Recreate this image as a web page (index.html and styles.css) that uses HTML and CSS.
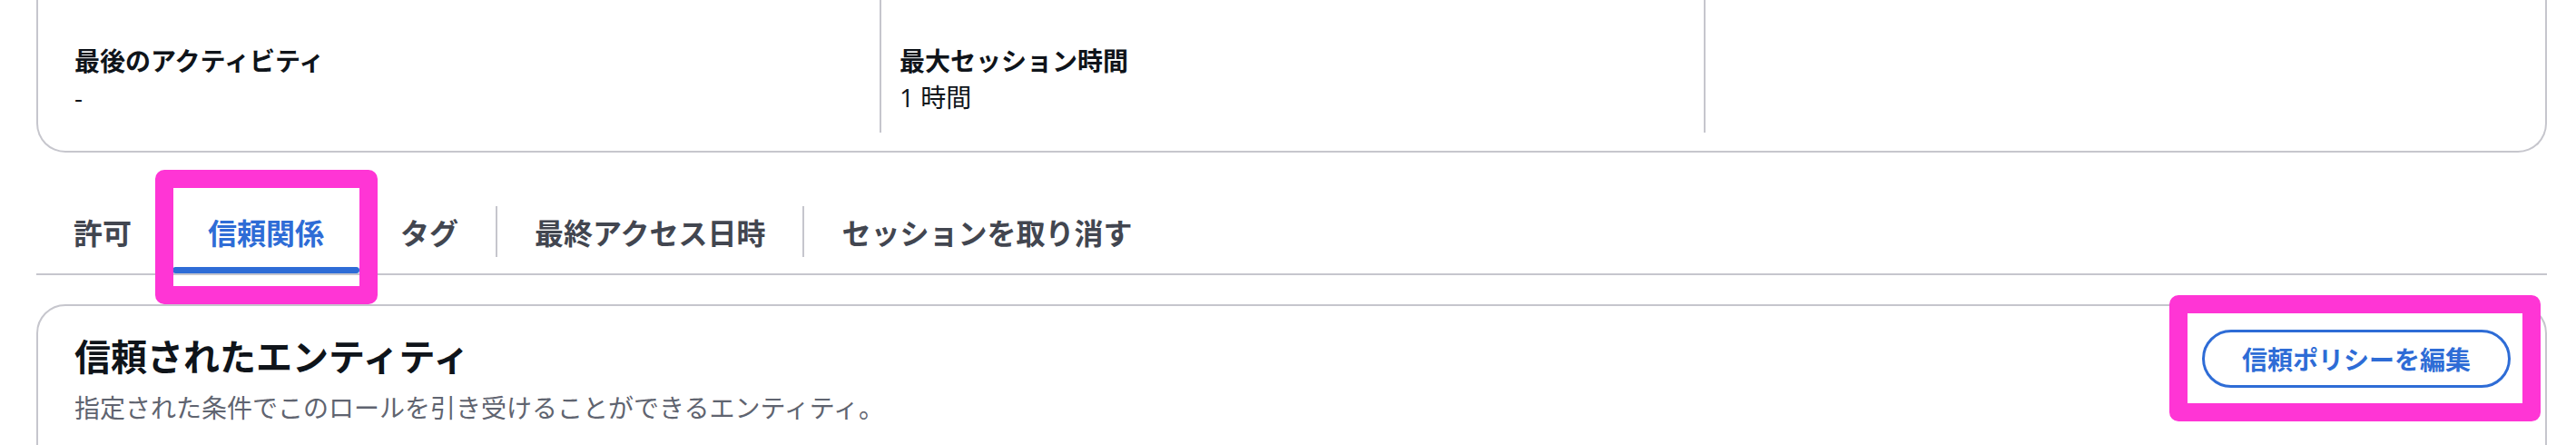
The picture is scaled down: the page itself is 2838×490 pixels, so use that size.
FILE: index.html
```html
<!DOCTYPE html>
<html lang="ja">
<head>
<meta charset="utf-8">
<title>ロール</title>
<link rel="stylesheet" href="styles.css">
</head>
<body>
<div class="page">
  <section class="summary">
    <div class="cols">
      <div class="col">
        <div class="label">最後のアクティビティ</div>
        <div class="value">-</div>
      </div>
      <div class="col col-div">
        <div class="label">最大セッション時間</div>
        <div class="value">1 時間</div>
      </div>
      <div class="col col-div"></div>
    </div>
  </section>

  <nav class="tabs">
    <div class="tab">許可</div>
    <span class="tab-sep"></span>
    <div class="tab tab-active">信頼関係</div>
    <span class="tab-sep"></span>
    <div class="tab">タグ</div>
    <span class="tab-sep"></span>
    <div class="tab">最終アクセス日時</div>
    <span class="tab-sep"></span>
    <div class="tab">セッションを取り消す</div>
  </nav>

  <section class="panel">
    <div class="panel-head">
      <div class="panel-titles">
        <h2 class="panel-title">信頼されたエンティティ</h2>
        <p class="panel-desc">指定された条件でこのロールを引き受けることができるエンティティ。</p>
      </div>
      <button class="btn">信頼ポリシーを編集</button>
    </div>
  </section>

  <div class="mark mark-tab"></div>
  <div class="mark mark-btn"></div>
</div>
</body>
</html>
```
FILE: styles.css
```css
* { box-sizing: border-box; }

html, body {
  margin: 0;
  padding: 0;
  background: #ffffff;
}

body {
  font-family: "Open Sans", "Noto Sans CJK JP", sans-serif;
  color: #0f141a;
  overflow: hidden;
}

.page {
  position: relative;
  padding: 0 32px 0 40px;
  height: 490px;
}

/* summary container (top cut off) */
.summary {
  border: 2px solid #c6c6cd;
  border-top: none;
  border-radius: 0 0 32px 32px;
  padding: 0 40px 20px 40px;
}

.cols {
  display: grid;
  grid-template-columns: 887px 908px 1fr;
}

.col {
  padding: 47px 0 19px 0;
  min-height: 146px;
}

.col-div {
  border-left: 2px solid #c6c6cd;
  padding-left: 20px;
}

.label {
  font-size: 28px;
  line-height: 40px;
  font-weight: 700;
  color: #0f141a;
}

.value {
  font-size: 28px;
  line-height: 40px;
  font-weight: 400;
  color: #0f141a;
}

/* tabs */
.tabs {
  margin-top: 41px;
  display: flex;
  align-items: center;
  border-bottom: 2px solid #c6c6cd;
  height: 94px;
}

.tab {
  position: relative;
  height: 92px;
  padding: 0 41px;
  display: flex;
  align-items: center;
  font-size: 32px;
  font-weight: 700;
  color: #424650;
  white-space: nowrap;
}

.tab-active {
  color: #2e6cd6;
}

.tab-active::after {
  content: "";
  position: absolute;
  left: 2px;
  right: 2px;
  bottom: 0;
  height: 7px;
  border-radius: 4px;
  background: #2e6cd6;
}

.tab-sep {
  width: 2px;
  height: 56px;
  background: #c6c6cd;
  flex: none;
}

/* trusted entities panel */
.panel {
  margin-top: 32px;
  border: 2px solid #c6c6cd;
  border-radius: 32px;
  padding: 26px 38px 40px 40px;
  min-height: 200px;
}

.panel-head {
  display: flex;
  justify-content: space-between;
  align-items: flex-start;
}

.panel-title {
  margin: 0;
  font-size: 40px;
  line-height: 60px;
  font-weight: 700;
  color: #0f141a;
}

.panel-desc {
  margin: 6px 0 0 0;
  font-size: 28px;
  line-height: 40px;
  color: #5f6470;
}

.btn {
  height: 64px;
  padding: 0 41px;
  border: 3px solid #2e6cd6;
  border-radius: 32px;
  background: #ffffff;
  color: #2e6cd6;
  font-family: "Open Sans", "Noto Sans CJK JP", sans-serif;
  font-size: 28px;
  font-weight: 700;
  display: flex;
  align-items: center;
  white-space: nowrap;
}

/* annotation highlights */
.mark {
  position: absolute;
  border: 20px solid #ff35d5;
  border-radius: 10px;
  pointer-events: none;
}

.mark-tab {
  left: 171px;
  top: 187px;
  width: 245px;
  height: 148px;
}

.mark-btn {
  left: 2390px;
  top: 325px;
  width: 409px;
  height: 139px;
}
```
